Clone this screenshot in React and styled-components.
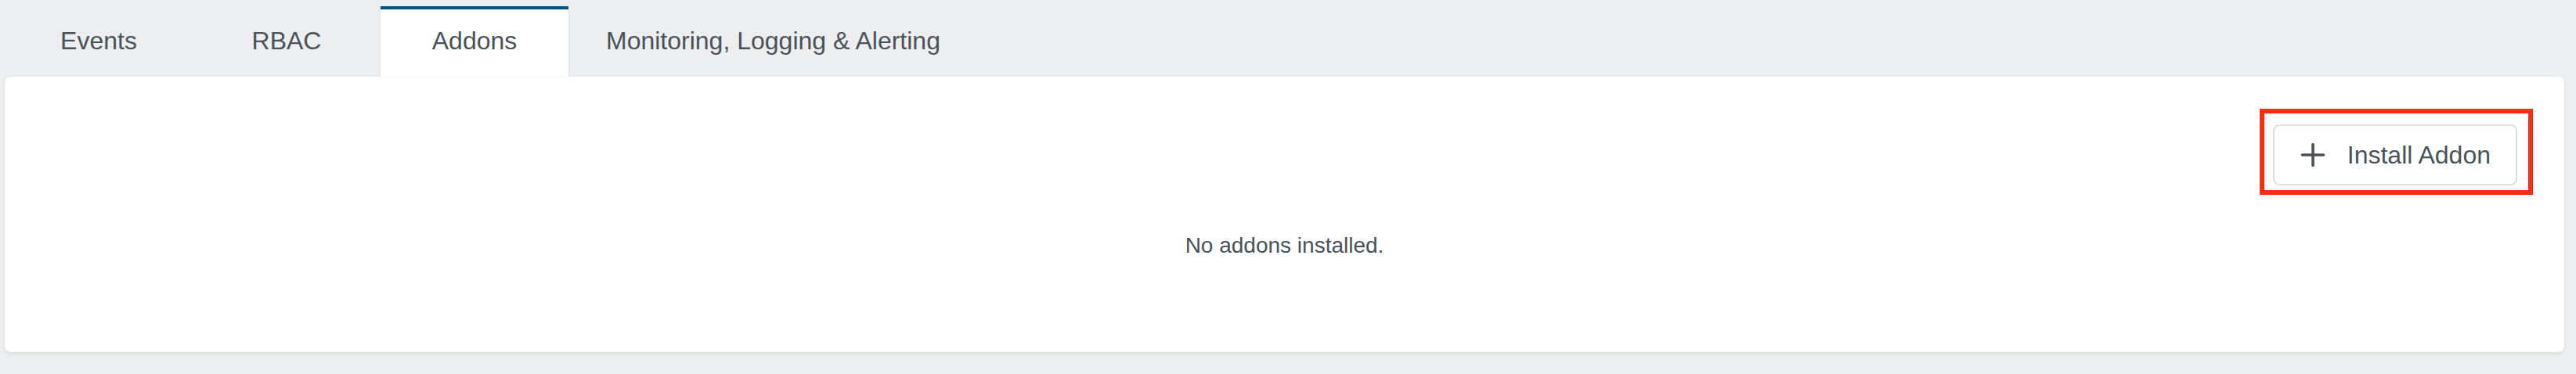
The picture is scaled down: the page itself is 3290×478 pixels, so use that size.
import React from "react";
import styled, { createGlobalStyle } from "styled-components";

const GlobalStyle = createGlobalStyle`
  html, body {
    margin: 0;
    padding: 0;
    background: #edeef0;
  }
  body {
    font-family: "Liberation Sans", Arial, Helvetica, sans-serif;
    color: #4a5259;
  }
`;

const Page = styled.div`
  padding: 8px 15px 28px 6px;
  display: flex;
  flex-direction: column;
`;

const TabBar = styled.div`
  display: flex;
  align-items: flex-end;
`;

const Tab = styled.div`
  position: relative;
  z-index: ${(p) => (p.$active ? 1 : 0)};
  min-width: 240px;
  box-sizing: border-box;
  padding: 22px 48px 27px;
  border-top: 4px solid ${(p) => (p.$active ? "#02507e" : "transparent")};
  background: ${(p) => (p.$active ? "#ffffff" : "transparent")};
  box-shadow: ${(p) =>
    p.$active
      ? "-1px 0 2px rgba(0,0,0,0.05), 1px 0 2px rgba(0,0,0,0.05)"
      : "none"};
  font-size: 32px;
  line-height: 37px;
  text-align: center;
  color: #4a5259;
  white-space: nowrap;
  cursor: pointer;
`;

const Panel = styled.div`
  position: relative;
  background: #ffffff;
  border-radius: 8px;
  box-shadow: 0 2px 4px rgba(0, 0, 0, 0.09);
  padding: 41px 40px 115px;
  display: flex;
  flex-direction: column;
`;

const Toolbar = styled.div`
  display: flex;
  justify-content: flex-end;
  margin-bottom: 44px;
`;

const Highlight = styled.div`
  border: 6px solid #ff2b12;
  padding: 14px 14px 6px 11px;
  display: flex;
`;

const Button = styled.button`
  display: flex;
  align-items: center;
  gap: 28px;
  height: 78px;
  box-sizing: border-box;
  padding: 0 32px 0 33px;
  background: #ffffff;
  border: 2px solid #dcdfe3;
  border-radius: 8px;
  font-family: "Liberation Sans", Arial, Helvetica, sans-serif;
  font-size: 32px;
  color: #4a5259;
  cursor: pointer;
`;

const EmptyText = styled.div`
  text-align: center;
  font-size: 28px;
  line-height: 42px;
  color: #4a5259;
`;

const PlusIcon = () => (
  <svg width="32" height="32" viewBox="0 0 32 32" fill="none">
    <path
      d="M2.5 16H29.5M16 2.5V29.5"
      stroke="#4a5259"
      strokeWidth="3.6"
      strokeLinecap="round"
    />
  </svg>
);

const tabs = ["Events", "RBAC", "Addons", "Monitoring, Logging & Alerting"];

export default function App() {
  return (
    <>
      <GlobalStyle />
      <Page>
        <TabBar>
          {tabs.map((t) => (
            <Tab key={t} $active={t === "Addons"}>
              {t}
            </Tab>
          ))}
        </TabBar>
        <Panel>
          <Toolbar>
            <Highlight>
              <Button>
                <PlusIcon />
                <span>Install Addon</span>
              </Button>
            </Highlight>
          </Toolbar>
          <EmptyText>No addons installed.</EmptyText>
        </Panel>
      </Page>
    </>
  );
}
